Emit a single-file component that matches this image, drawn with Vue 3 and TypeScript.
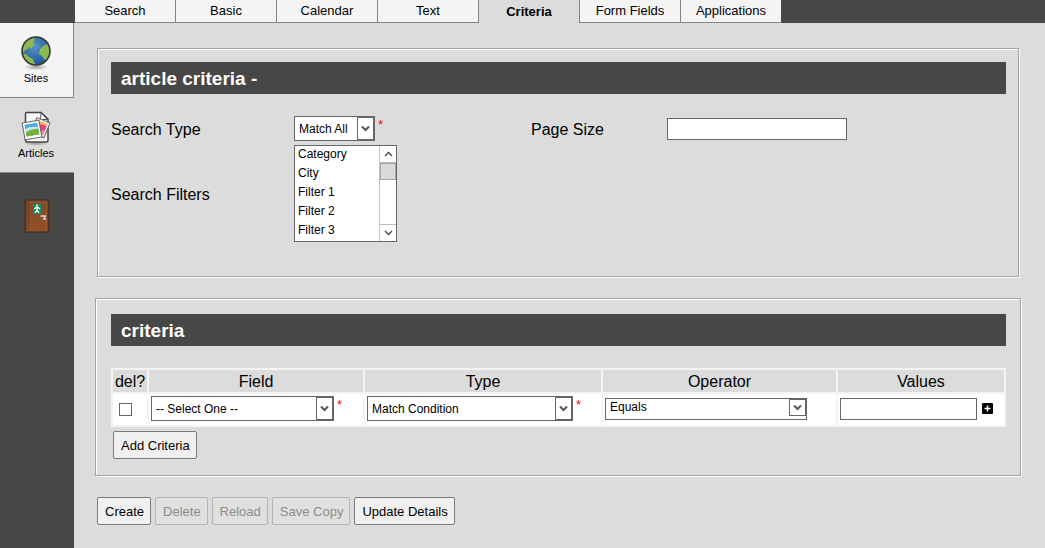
<script setup lang="ts">
import { ref } from 'vue'

interface Action {
  label: string
  disabled: boolean
}

const tabs = ['Search', 'Basic', 'Calendar', 'Text', 'Criteria', 'Form Fields', 'Applications']
const activeTab = ref('Criteria')

const filters = ['Category', 'City', ...Array.from({ length: 16 }, (_, i) => `Filter ${i + 1}`)]
const selectedFilters = ref<string[]>([])
const filterList = ref<HTMLSelectElement | null>(null)

const searchType = ref('Match All')
const pageSize = ref('')
const field = ref('-- Select One --')
const matchType = ref('Match Condition')
const operator = ref('Equals')
const criteriaValue = ref('')
const remove = ref(false)

const actions: Action[] = [
  { label: 'Create', disabled: false },
  { label: 'Delete', disabled: true },
  { label: 'Reload', disabled: true },
  { label: 'Save Copy', disabled: true },
  { label: 'Update Details', disabled: false },
]

function scrollFilters(amount: number) {
  filterList.value?.scrollBy({ top: amount })
}
</script>

<template>
  <div class="page">
    <header class="topbar">
      <nav class="tabs">
        <a
          v-for="tab in tabs"
          :key="tab"
          href="#"
          class="tab"
          :class="{ active: tab === activeTab }"
          @click.prevent="activeTab = tab"
        >{{ tab }}</a>
      </nav>
    </header>

    <div class="body">
      <aside class="sidebar">
        <a href="#" class="side-item raised">
          <svg class="side-icon" viewBox="0 0 32 36" aria-hidden="true">
            <defs>
              <radialGradient id="sea" cx="45%" cy="35%" r="65%">
                <stop offset="0" stop-color="#5593cb" />
                <stop offset="1" stop-color="#1f5596" />
              </radialGradient>
              <radialGradient id="shade">
                <stop offset="0" stop-color="#000" stop-opacity=".35" />
                <stop offset="1" stop-color="#000" stop-opacity="0" />
              </radialGradient>
              <clipPath id="globe"><circle cx="16" cy="15" r="13.5" /></clipPath>
            </defs>
            <ellipse cx="16" cy="31" rx="12" ry="3.5" fill="url(#shade)" />
            <circle cx="16" cy="15" r="14" fill="url(#sea)" />
            <g clip-path="url(#globe)" fill="#8cba50">
              <path d="M2 14L4 7 9 3 14 2 15 4 13 6 15 9 12 11 11 13 9 11 7 14 5 14 4 17Z" />
              <path d="M23 10L27 8 31 11 30 21 27 25 24 23 22 20 19 18 20 13Z" />
              <path d="M3 18L6 18 9 21 13 23 14 26 16 29 10 29 6 25Z" />
            </g>
            <circle cx="16" cy="15" r="14" fill="none" stroke="#35393b" stroke-width="1.5" />
          </svg>
          <span>Sites</span>
        </a>
        <a href="#" class="side-item current">
          <svg class="side-icon" viewBox="0 0 32 36" aria-hidden="true">
            <ellipse cx="16" cy="32" rx="12" ry="3" fill="url(#shade)" />
            <path d="M6.500 1.500H21L28 8V29.500Q28 31 26.500 31H7Q5.500 31 5.500 29.500V2.500Q5.500 1.500 6.500 1.500Z" fill="#f8f8f8" stroke="#454545" stroke-width="1.5" />
            <path d="M21 2L20.500 8.500H27.500Z" fill="#fff" stroke="#555" />
            <g transform="rotate(22 21 18)">
              <rect x="13" y="9" width="14" height="16" fill="#fff" stroke="#666" />
              <rect x="15" y="11" width="10.500" height="12" fill="#ef8db0" />
              <circle cx="22" cy="16" r="3.200" fill="#e83f7e" />
              <path d="M15 11H25V13.500H15Z" fill="#f6b65b" />
            </g>
            <g transform="rotate(-10 12 19)">
              <rect x="3.500" y="10.500" width="17" height="17" fill="#fff" stroke="#666" />
              <rect x="5.500" y="12.500" width="13" height="12" fill="#53a9e4" />
              <path d="M5.500 17Q10 14.500 18.500 17V21H5.500Z" fill="#c5e7f6" />
              <path d="M5.500 20.500Q12 17.500 18.500 19V24.500H5.500Z" fill="#79ae31" />
            </g>
          </svg>
          <span>Articles</span>
        </a>
        <a href="#" class="exit" aria-label="Exit">
          <svg width="28" height="36" viewBox="0 0 28 36" aria-hidden="true">
            <defs>
              <linearGradient id="wood" x1="0" x2="0" y1="0" y2="1">
                <stop offset="0" stop-color="#80492a" />
                <stop offset="1" stop-color="#945125" />
              </linearGradient>
            </defs>
            <path d="M1.500 34.500V3Q1.500 1.500 3 1.500H25Q26.500 1.500 26.500 3V34.500Z" fill="#33302e" />
            <rect x="3" y="2.500" width="22" height="31" fill="url(#wood)" stroke="#643a20" />
            <path d="M5.500 4.500V32" stroke="#6d3c1c" />
            <path d="M6 4.500H23.500V32" fill="none" stroke="#a56a3d" stroke-opacity=".5" />
            <rect x="10" y="6" width="8" height="10" fill="#12925b" />
            <circle cx="14" cy="7.500" r="1" fill="#fff" />
            <path d="M14 9V12L16 15M14 12L12 15M11.500 11L13 9.500H15L17 11" fill="none" stroke="#fff" stroke-width="1.300" />
            <path d="M17.500 18H23M21.500 18V21" stroke="#d7d7d7" stroke-width="1.500" />
            <rect x="20" y="20" width="3" height="2" fill="#babec3" />
          </svg>
        </a>
      </aside>

      <main class="content">
        <section class="panel article-panel">
          <h2 class="panel-title">article criteria -</h2>
          <div class="form-grid">
            <label for="search-type">Search Type</label>
            <div class="control">
              <span class="picker type-picker">
                <select id="search-type" v-model="searchType"><option>Match All</option></select>
              </span>
              <span class="required">*</span>
            </div>
            <label for="page-size">Page Size</label>
            <input id="page-size" v-model="pageSize" class="text-box page-size" type="text">

            <label for="filters">Search Filters</label>
            <div class="list-box">
              <select id="filters" ref="filterList" v-model="selectedFilters" multiple size="5">
                <option v-for="item in filters" :key="item">{{ item }}</option>
              </select>
              <div class="scroller">
                <button type="button" aria-label="Scroll up" @click="scrollFilters(-19)">
                  <svg width="9" height="6" viewBox="0 0 9 6"><path d="M1 5L4.500 1.500 8 5" /></svg>
                </button>
                <div class="thumb"></div>
                <button type="button" class="down" aria-label="Scroll down" @click="scrollFilters(19)">
                  <svg width="9" height="6" viewBox="0 0 9 6"><path d="M1 1L4.500 4.500 8 1" /></svg>
                </button>
              </div>
            </div>
          </div>
        </section>

        <section class="panel criteria-panel">
          <h2 class="panel-title">criteria</h2>
          <table class="criteria">
            <colgroup>
              <col class="col-del"><col class="col-field"><col class="col-type"><col class="col-operator"><col>
            </colgroup>
            <thead>
              <tr><th>del?</th><th>Field</th><th>Type</th><th>Operator</th><th>Values</th></tr>
            </thead>
            <tbody>
              <tr>
                <td class="del-cell"><input v-model="remove" class="tick" type="checkbox" aria-label="del?"></td>
                <td>
                  <div class="control">
                    <span class="picker field-picker">
                      <select v-model="field" aria-label="Field"><option>-- Select One --</option></select>
                    </span>
                    <span class="required">*</span>
                  </div>
                </td>
                <td>
                  <div class="control">
                    <span class="picker match-picker">
                      <select v-model="matchType" aria-label="Type"><option>Match Condition</option></select>
                    </span>
                    <span class="required">*</span>
                  </div>
                </td>
                <td>
                  <div class="control">
                    <span class="picker short operator-picker">
                      <select v-model="operator" aria-label="Operator"><option>Equals</option></select>
                    </span>
                  </div>
                </td>
                <td>
                  <div class="control value-control">
                    <input v-model="criteriaValue" class="text-box value-box" type="text" aria-label="Values">
                    <button type="button" class="plus" aria-label="Add value">
                      <svg width="11" height="11" viewBox="0 0 11 11">
                        <rect width="11" height="11" rx="1" />
                        <path d="M5.500 2.500V8.500M2.500 5.500H8.500" stroke="#fff" stroke-width="1.500" />
                      </svg>
                    </button>
                  </div>
                </td>
              </tr>
            </tbody>
          </table>
          <button type="button" class="btn add">Add Criteria</button>
        </section>

        <div class="actions">
          <button v-for="action in actions" :key="action.label" type="button" class="btn" :disabled="action.disabled">
            {{ action.label }}
          </button>
        </div>
      </main>
    </div>
  </div>
</template>

<style>
body {
  margin: 0;
  background: #dcdcdc;
}
</style>

<style scoped>
.page {
  display: flex;
  flex-direction: column;
  min-height: 100vh;
  color: #000;
  background: #dcdcdc;
  font: 16px/20px "Liberation Sans", Arial, sans-serif;
}

.page * {
  box-sizing: border-box;
}

a {
  color: inherit;
  text-decoration: none;
}

button,
input,
select {
  margin: 0;
  color: #000;
  font-family: inherit;
}

.topbar {
  height: 23px;
  padding-left: 75px;
  background: #474747;
}

.tabs {
  display: flex;
  height: 100%;
}

.tab {
  width: 101px;
  border-right: 1px solid #858585;
  border-bottom: 1px solid #858585;
  background: #f4f4f4;
  font-size: 13px;
  line-height: 21px;
  text-align: center;
}

.tab:last-child {
  border-right-color: #474747;
}

.tab.active {
  border-bottom: 0;
  background: #dcdcdc;
  font-weight: bold;
  line-height: 23px;
}

.body {
  display: flex;
  flex: 1;
}

.sidebar {
  flex: none;
  width: 74px;
  background: #474747;
}

.side-item {
  display: flex;
  flex-direction: column;
  align-items: center;
  height: 75px;
  padding: 13px 2px 0 0;
  border-bottom: 1px solid #858585;
  font-size: 11px;
  line-height: 12px;
}

.side-icon {
  width: 32px;
  height: 36px;
}

.raised {
  border-right: 1px solid #858585;
  background: #f4f4f4;
  padding-right: 1px;
}

.current {
  background: #dcdcdc;
}

.exit {
  display: flex;
  justify-content: center;
  padding-top: 25px;
}

.content {
  flex: 1;
  min-width: 0;
  padding: 25px 24px 23px 21px;
}

.panel {
  border: 1px solid #a3a3a3;
  box-shadow: 1px 1px 0 #fff, inset 1px 1px 0 #fff;
}

.article-panel {
  min-height: 229px;
  margin: 0 2px 21px;
  padding: 13px 12px 34px 13px;
}

.criteria-panel {
  padding: 15px 14px 16px 15px;
}

.panel-title {
  margin: 0 0 22px;
  padding: 2px 10px 0;
  color: #fff;
  background: #474747;
  font-size: 19px;
  line-height: 30px;
}

.form-grid {
  display: grid;
  grid-template-columns: 183px 237px 136px 1fr;
  row-gap: 4px;
  align-items: center;
}

.form-grid label {
  padding-top: 2px;
}

.control {
  display: flex;
  align-items: center;
}

.picker {
  position: relative;
  display: block;
  height: 25px;
}

.picker select {
  appearance: none;
  display: block;
  width: 100%;
  height: 100%;
  padding: 0 20px 0 4px;
  border: 1px solid #666;
  border-radius: 0;
  background: #fff;
  font-size: 12px;
}

.picker::after {
  content: "";
  position: absolute;
  top: 1px;
  right: 1px;
  bottom: 1px;
  width: 17px;
  box-sizing: border-box;
  border: 1px solid #666;
  background: #fff url("data:image/svg+xml,%3Csvg xmlns='http://www.w3.org/2000/svg' width='9' height='7'%3E%3Cpath d='M1 1.500L4.500 5 8 1.500' fill='none' stroke='%23555' stroke-width='2'/%3E%3C/svg%3E") center no-repeat;
  pointer-events: none;
}

.type-picker {
  width: 81px;
}

.field-picker {
  width: 183px;
}

.match-picker {
  width: 206px;
}

.operator-picker {
  width: 202px;
}

.picker.short {
  height: 22px;
}

.picker.short select {
  padding-bottom: 4px;
}

.picker.short::after {
  bottom: 4px;
}

.required {
  align-self: flex-start;
  margin-left: 3px;
  color: #f00;
  font-size: 13px;
  line-height: 18px;
}

.text-box {
  height: 22px;
  padding: 1px 3px;
  border: 1px solid #666;
  border-radius: 0;
  background: #fff;
  font-size: 12px;
}

.page-size {
  width: 180px;
}

.list-box {
  display: flex;
  width: 103px;
  height: 97px;
  border: 1px solid #666;
  background: #fff;
}

.list-box select {
  flex: 1;
  min-width: 0;
  height: 95px;
  padding: 0;
  border: 0;
  border-radius: 0;
  outline: 0;
  background: #fff;
  font-size: 12px;
  scrollbar-width: none;
}

.list-box option {
  height: 19px;
  min-height: 19px;
  padding: 1px 3px 0;
  line-height: 16px;
}

.scroller {
  display: flex;
  flex-direction: column;
  width: 17px;
  border-left: 1px solid #c4c4c4;
}

.scroller button {
  display: flex;
  align-items: center;
  justify-content: center;
  height: 17px;
  padding: 0;
  border: 0;
  border-bottom: 1px solid #bbb;
  background: #fff;
}

.scroller .down {
  margin-top: auto;
  border-top: 1px solid #bbb;
  border-bottom: 0;
}

.scroller path {
  fill: none;
  stroke: #444;
  stroke-width: 1.3;
}

.thumb {
  height: 17px;
  border: 1px solid #a6a6a6;
  background: #dadada;
}

.criteria {
  width: 100%;
  border-collapse: collapse;
  table-layout: fixed;
}

.criteria th,
.criteria td {
  border: 2px solid #f4f4f4;
}

.criteria th {
  height: 24px;
  padding: 2px 0 0;
  font-weight: normal;
}

.criteria td {
  height: 33px;
  padding: 1px 2px 3px;
  background: #fff;
}

.criteria .del-cell {
  padding: 2px 2px 2px 6px;
}

.col-del {
  width: 36px;
}

.col-field {
  width: 216px;
}

.col-type {
  width: 238px;
}

.col-operator {
  width: 235px;
}

.tick {
  appearance: none;
  display: block;
  width: 13px;
  height: 13px;
  border: 1px solid #666;
  background: #fff;
}

.tick:checked {
  box-shadow: inset 0 0 0 2px #fff;
  background: #444;
}

.value-control {
  gap: 5px;
}

.value-box {
  width: 137px;
}

.plus {
  display: flex;
  padding: 0;
  border: 0;
  background: none;
}

.btn {
  height: 28px;
  padding: 0 6px 0 7px;
  border: 1px solid #7c7c7c;
  border-radius: 2px;
  background: #f0f0f0;
  font-size: 13px;
}

.btn:disabled {
  color: #8c8c8c;
  border-color: #b5b5b5;
  background: #e0e0e0;
}

.add {
  display: block;
  margin: 4px 0 0 2px;
}

.actions {
  display: flex;
  flex-wrap: wrap;
  gap: 4px;
  padding: 21px 2px 0;
}
</style>
